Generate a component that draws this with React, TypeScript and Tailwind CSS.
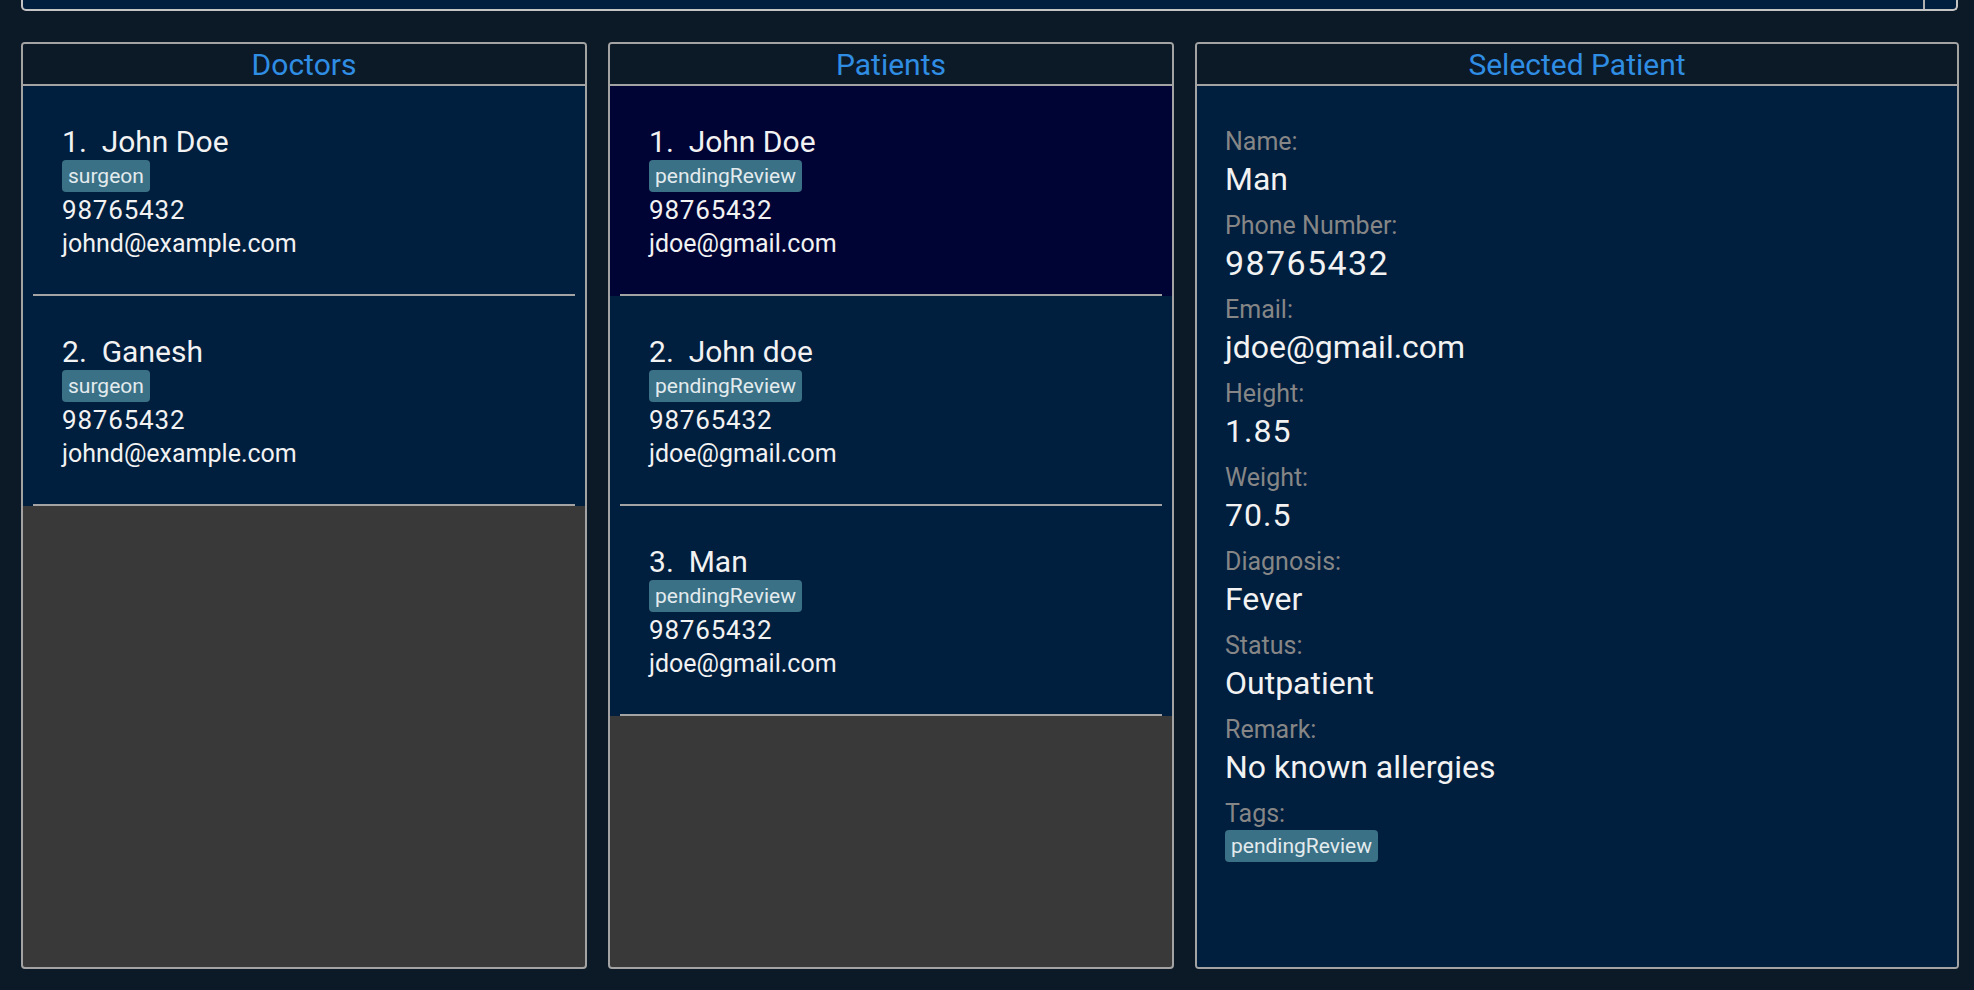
const doctors = [
  { name: "John Doe", tag: "surgeon", phone: "98765432", email: "johnd@example.com" },
  { name: "Ganesh", tag: "surgeon", phone: "98765432", email: "johnd@example.com" },
];

const patients = [
  { name: "John Doe", tag: "pendingReview", phone: "98765432", email: "jdoe@gmail.com" },
  { name: "John doe", tag: "pendingReview", phone: "98765432", email: "jdoe@gmail.com" },
  { name: "Man", tag: "pendingReview", phone: "98765432", email: "jdoe@gmail.com" },
];

// label, value, extra sizing for digit-heavy values
const details = [
  ["Name:", "Man", "text-[32px]"],
  ["Phone Number:", "98765432", "text-[34px] tracking-[1.4px]"],
  ["Email:", "jdoe@gmail.com", "text-[32px]"],
  ["Height:", "1.85", "text-[32px] tracking-[1px]"],
  ["Weight:", "70.5", "text-[32px] tracking-[1px]"],
  ["Diagnosis:", "Fever", "text-[32px]"],
  ["Status:", "Outpatient", "text-[32px]"],
  ["Remark:", "No known allergies", "text-[32px]"],
];

type Person = { name: string; tag: string; phone: string; email: string };

const Tag = ({ label }: { label: string }) => (
  <span className="inline-block h-[32px] rounded-[4px] bg-[#3a7186] px-[6px] text-[21px] leading-[32px] text-[#e3ebee]">
    {label}
  </span>
);

const PersonCard = ({ index, person, selected }: { index: number; person: Person; selected?: boolean }) => (
  <div className={selected ? "bg-[#000435]" : "bg-[#001e3e]"}>
    <div className="flex flex-col items-start pt-[38px] pb-[33px] pl-[39px] text-[#f2f2f2]">
      <p className="whitespace-pre text-[30px] leading-[36px]">
        {index}.  {person.name}
      </p>
      <Tag label={person.tag} />
      <p className="pt-[1px] text-[26px] leading-[34px] tracking-[0.8px]">{person.phone}</p>
      <p className="text-[25px] leading-[34px]">{person.email}</p>
    </div>
    <div className="mx-[10px] h-[2px] bg-[#a3a3a3]" />
  </div>
);

const Panel = ({ title, className, children }: { title: string; className: string; children: React.ReactNode }) => (
  <div className={`flex flex-col overflow-hidden rounded-[4px] border-2 border-[#a3a3a3] ${className}`}>
    <div className="h-[42px] shrink-0 border-b-2 border-[#a3a3a3] bg-[#0c1a27] pt-[2px] text-center text-[30px] leading-[38px] text-[#2f8de4]">
      {title}
    </div>
    {children}
  </div>
);

export default function App() {
  return (
    <div className="h-[990px] w-full overflow-hidden bg-[#0c1a27] font-['Roboto','Liberation_Sans',sans-serif]">
      <div className="ml-[21px] mr-[16px] flex h-[11px] rounded-b-[5px] border-2 border-t-0 border-[#c4c4c4] bg-[#001e3e]">
        <div className="flex-1" />
        <div className="w-[33px] border-l-2 border-[#b0b0b0]" />
      </div>

      <div className="mt-[31px] flex h-[927px] gap-[21px] pl-[21px] pr-[15px]">
        <Panel title="Doctors" className="w-[566px] bg-[#393939]">
          <div className="flex flex-col">
            {doctors.map((d, i) => (
              <PersonCard key={i} index={i + 1} person={d} />
            ))}
          </div>
        </Panel>

        <Panel title="Patients" className="w-[566px] bg-[#393939]">
          <div className="flex flex-col">
            {patients.map((p, i) => (
              <PersonCard key={i} index={i + 1} person={p} selected={i === 0} />
            ))}
          </div>
        </Panel>

        <Panel title="Selected Patient" className="flex-1 bg-[#001e3e]">
          <div className="flex flex-1 flex-col items-start bg-[#001e3e] pt-[40px] pl-[28px]">
            {details.map(([label, value, extra]) => (
              <div key={label} className="mb-[9px]">
                <p className="text-[25px] leading-[32px] text-[#868686]">{label}</p>
                <p className={`leading-[43px] text-[#f2f2f2] ${extra}`}>{value}</p>
              </div>
            ))}
            <p className="text-[25px] leading-[32px] text-[#868686]">Tags:</p>
            <Tag label="pendingReview" />
          </div>
        </Panel>
      </div>
    </div>
  );
}
